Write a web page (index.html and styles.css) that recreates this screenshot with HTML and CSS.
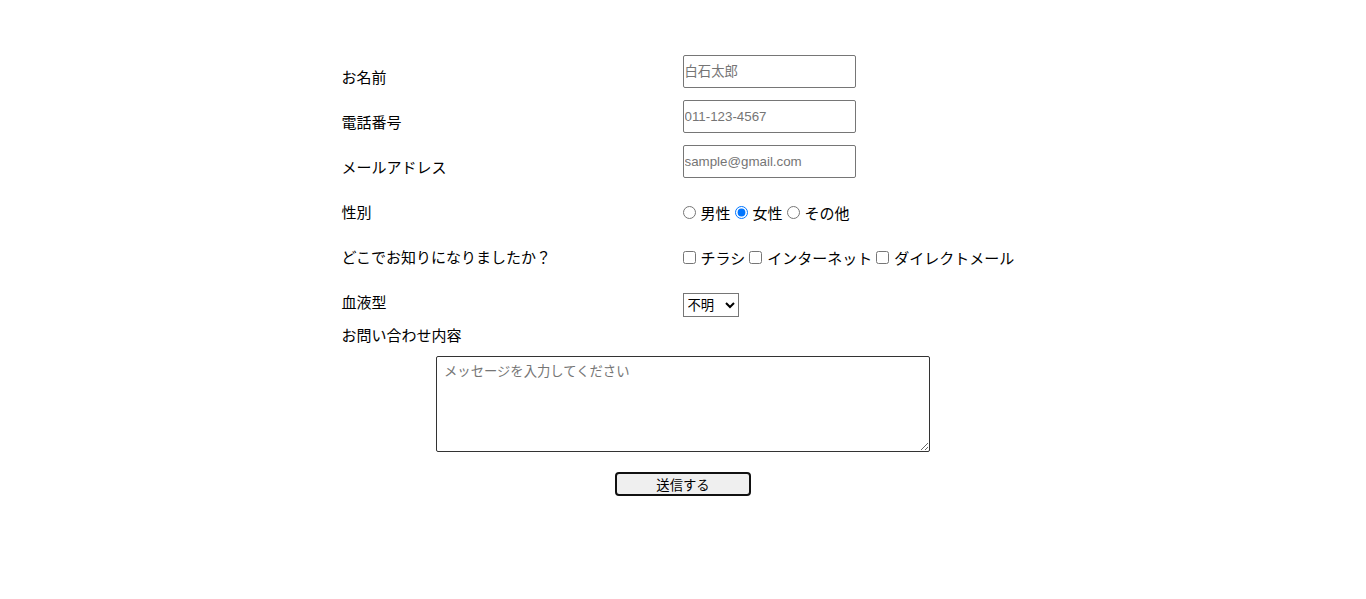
FILE: index.html
```html
<!DOCTYPE html>
<html lang="ja">
<head>
    <meta charset="UTF-8">
    <meta name="viewport" content="width=device-width, initial-scale=1.0">
    <title>お問い合わせ</title>
    <link rel="stylesheet" href="styles.css">
</head>
<body>
    <form class="contact-form">
        <div class="form-row">
            <div class="form-label">お名前</div>
            <div class="form-field"><input type="text" class="text-input" placeholder="白石太郎"></div>
        </div>
        <div class="form-row">
            <div class="form-label">電話番号</div>
            <div class="form-field"><input type="tel" class="text-input" placeholder="011-123-4567"></div>
        </div>
        <div class="form-row">
            <div class="form-label">メールアドレス</div>
            <div class="form-field"><input type="email" class="text-input" placeholder="sample@gmail.com"></div>
        </div>
        <div class="form-row">
            <div class="form-label">性別</div>
            <div class="form-field options">
                <label class="option"><input type="radio" name="gender">男性</label>
                <label class="option"><input type="radio" name="gender" checked>女性</label>
                <label class="option"><input type="radio" name="gender">その他</label>
            </div>
        </div>
        <div class="form-row">
            <div class="form-label">どこでお知りになりましたか？</div>
            <div class="form-field options">
                <label class="option"><input type="checkbox">チラシ</label>
                <label class="option"><input type="checkbox">インターネット</label>
                <label class="option"><input type="checkbox">ダイレクトメール</label>
            </div>
        </div>
        <div class="form-row short">
            <div class="form-label">血液型</div>
            <div class="form-field">
                <select class="blood-select">
                    <option>不明</option>
                    <option>A型</option>
                    <option>B型</option>
                    <option>O型</option>
                    <option>AB型</option>
                </select>
            </div>
        </div>
        <div class="form-label">お問い合わせ内容</div>
        <div class="message-area">
            <textarea class="message" placeholder="メッセージを入力してください"></textarea>
        </div>
        <div class="submit-area">
            <button type="submit" class="submit-button">送信する</button>
        </div>
    </form>
</body>
</html>
```

FILE: styles.css
```css
body {
    margin: 0;
    padding-top: 55px;
    background-color: white;
    color: #000;
    font-family: "Liberation Serif", "Noto Sans CJK JP", serif;
}

.contact-form {
    width: 683px;
    margin: 0 auto;
}

.form-row {
    display: grid;
    grid-template-columns: 341px 1fr;
    height: 45px;
}

.form-row.short {
    height: 46px;
}

.form-label {
    font-size: 15px;
    line-height: 20px;
    padding-top: 13px;
}

.contact-form > .form-label {
    padding-top: 0;
}

.text-input {
    box-sizing: border-box;
    width: 173px;
    height: 33px;
    margin: 0;
    padding: 1px 1px;
    border: 1px solid #767676;
    border-radius: 2px;
    font-family: "Liberation Sans", "Noto Sans CJK JP", sans-serif;
    font-size: 13.33px;
}

.text-input::placeholder,
.message::placeholder {
    color: #757575;
}

.options {
    display: flex;
    align-items: center;
    height: 20px;
    margin-top: 12px;
    font-size: 15px;
    gap: 4px;
}

.option {
    display: flex;
    align-items: center;
    gap: 5px;
}

.option input {
    width: 13px;
    height: 13px;
    margin: 0;
}

.blood-select {
    margin-top: 13px;
    height: 24px;
    width: 56px;
    border: 1px solid #767676;
    border-radius: 0;
    background-color: white;
    font-family: "Liberation Sans", "Noto Sans CJK JP", sans-serif;
    font-size: 13.33px;
}

.message-area {
    display: flex;
    justify-content: center;
    margin-top: 10px;
}

.message {
    box-sizing: border-box;
    width: 494px;
    height: 96px;
    margin: 0;
    padding: 4px 7px;
    border: 1px solid #333;
    border-radius: 2px;
    font-family: "Liberation Sans", "Noto Sans CJK JP", sans-serif;
    font-size: 13.33px;
}

.submit-area {
    display: flex;
    justify-content: center;
    margin-top: 20px;
}

.submit-button {
    box-sizing: border-box;
    width: 136px;
    height: 24px;
    padding: 0;
    border: 2px solid #111;
    border-radius: 4px;
    background-color: #efefef;
    font-family: "Liberation Sans", "Noto Sans CJK JP", sans-serif;
    font-size: 13.33px;
    cursor: pointer;
}
```
